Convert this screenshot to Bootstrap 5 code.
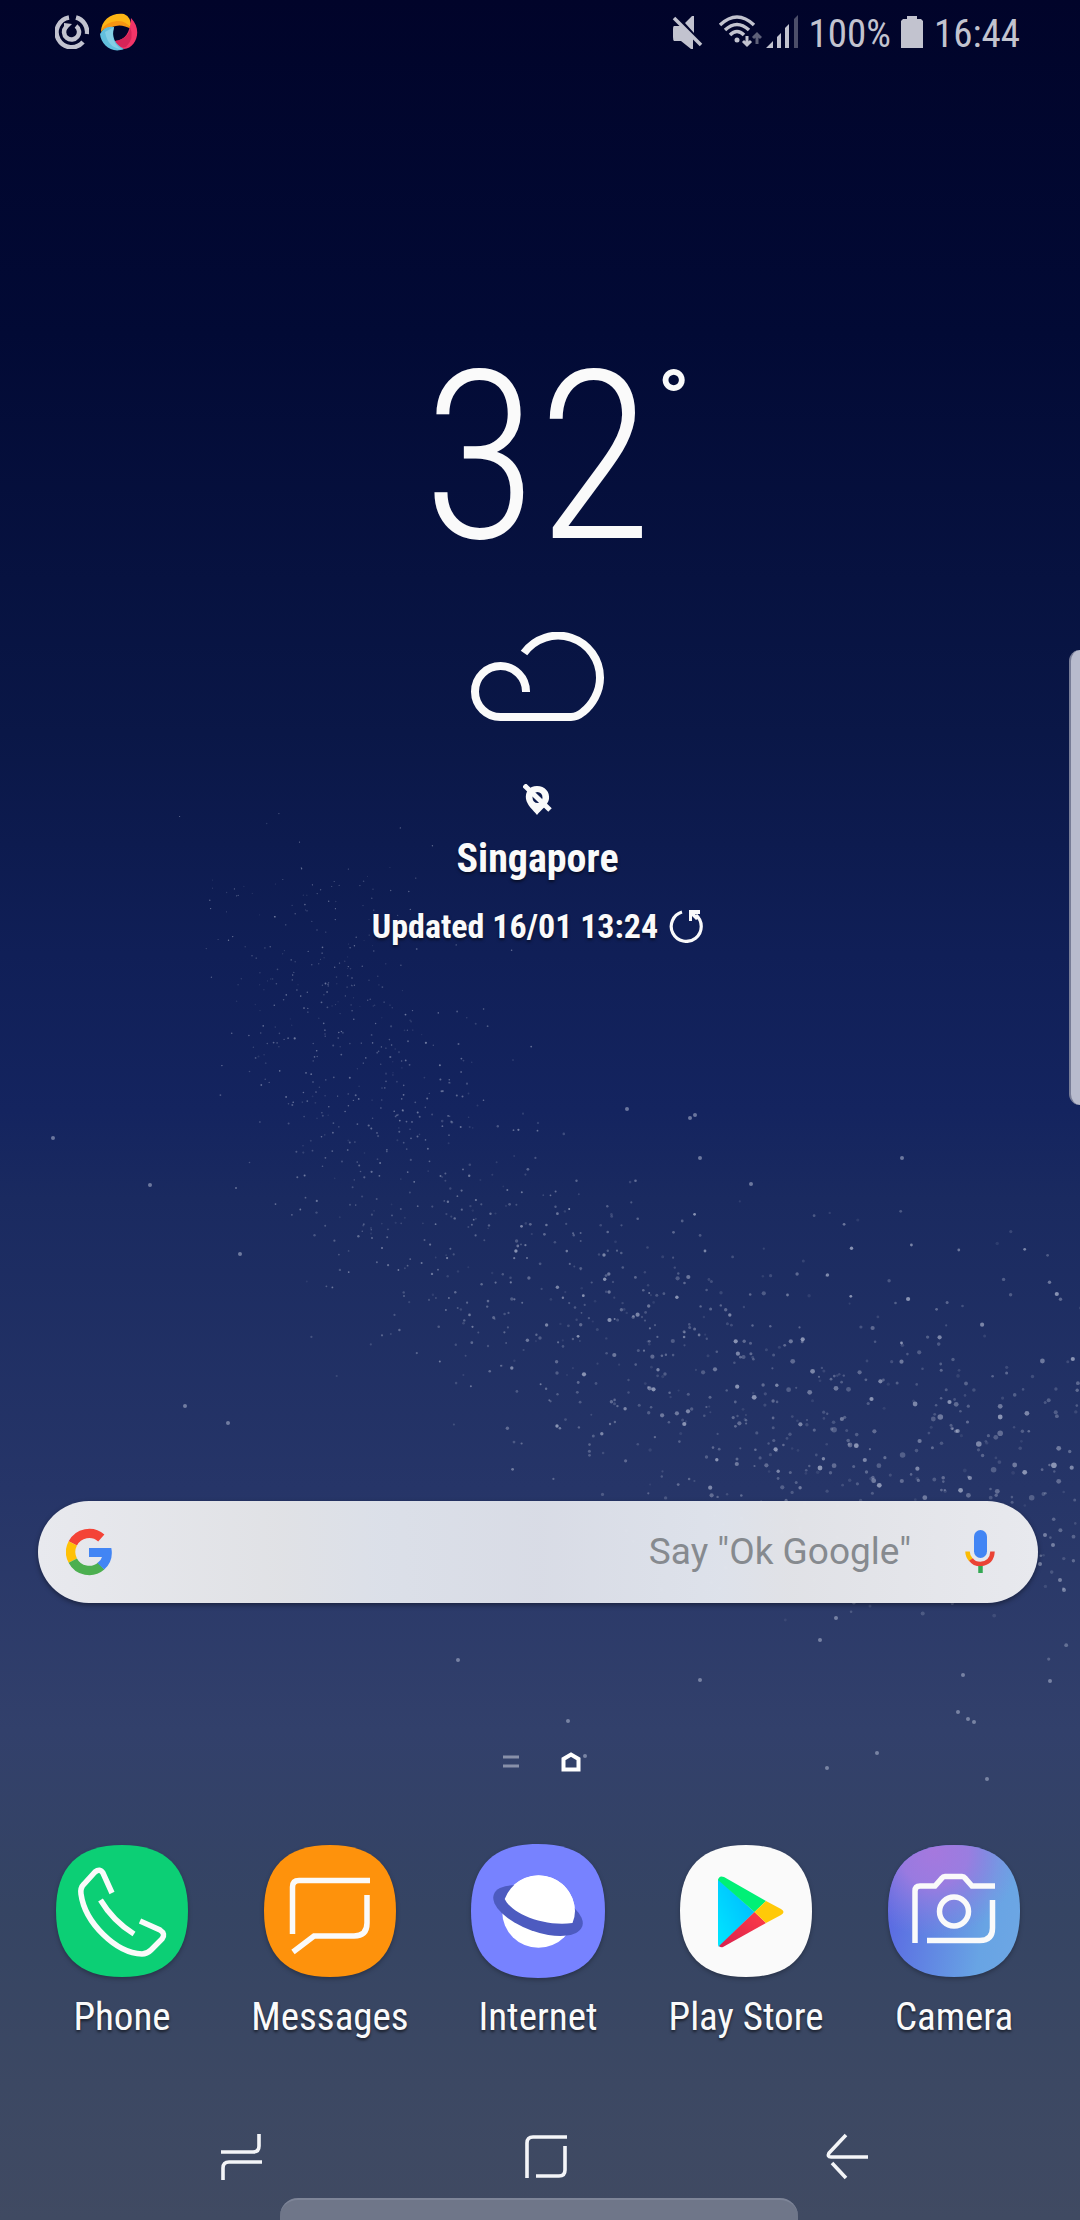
<!DOCTYPE html>
<html lang="en">
<head>
<meta charset="utf-8">
<meta name="viewport" content="width=device-width, initial-scale=1">
<title>Home screen</title>
<link href="https://cdn.jsdelivr.net/npm/bootstrap@5.3.0/dist/css/bootstrap.min.css" rel="stylesheet">
<style>
body{font-family:"Roboto Condensed",Roboto,"Liberation Sans",sans-serif;color:#fafafa;background:#3f4a62}
.phone-screen{background:linear-gradient(#01042a 0,#020a35 15%,#0a1747 33%,#101f57 43%,#14245f 50%,#1a2a60 54%,#263568 67%,#32406b 78%,#354463 86%,#3c4863 94%,#404a62 100%)}
.dust-layer{inset:0;width:100%;height:100%;pointer-events:none}
.status-row{height:64px;padding:0 60px 0 55px;color:#c2c3cf;font-size:39px;line-height:60px}
.wifi-sign{margin-left:14px}
.battery-text{margin-left:8px}
.battery-sign{margin-left:10px}
.clock-text{margin-left:11px}
.weather-box{padding-top:278px;padding-right:5px}
.temp-value{font-weight:300;font-size:236px;line-height:232px}
.temp-degree{font-size:86px;line-height:86px;font-weight:500;top:16px;left:100%;margin-left:5px}
.weather-cloud{margin-top:58px}
.weather-pin{margin-top:62px}
.city-name{font-size:40px;line-height:48px;font-weight:700;margin-top:19px;text-shadow:0 2px 3px #0008}
.updated-row{font-size:34px;line-height:40px;font-weight:700;gap:11px;margin-top:23px;text-shadow:0 2px 3px #0008}
.search-box{height:102px;margin:555px 42px 0 38px;padding:0 43px 0 28px;border-radius:51px;background:linear-gradient(90deg,#e8e9ee,#e4e5e8fa 24%,#dfe3ebfa 34%,#dcdfe8fa 50%,#e1e5edfa 68%,#e4e5e9fa 75%,#e8e9ee);box-shadow:0 2px 5px #0006}
.search-box input{font-family:Roboto,"Liberation Sans",sans-serif;font-size:37px;text-align:right;color:#868a8f;padding:0 54px 0 0}
.search-box input::placeholder{color:#868a8f;opacity:1}
.page-marks{margin-top:148px;gap:42px;height:22px;padding-left:3px}
.dock-row{margin-top:72px;padding:0 22px 0 18px}
.app-link{color:#fafafa;font-size:39px;line-height:48px;gap:16px;text-shadow:0 2px 3px #0009}
.app-link svg{filter:drop-shadow(0 2px 2px #0004)}
.nav-row{margin-top:84px;padding:0 211px 0 218px;height:64px}
.bottom-grip{height:22px;margin:9px 282px 0 280px;border-radius:18px 18px 0 0;background:#6f7689;border-top:2px solid #7e8598}
.edge-grip{right:0;top:650px;width:11px;height:455px;border-radius:11px 0 0 11px;background:#b8bbcd;border-left:2px solid #777c96}
</style>
<script src="https://cdn.jsdelivr.net/npm/bootstrap@5.3.0/dist/js/bootstrap.bundle.min.js"></script>
</head>
<body>
<div class="phone-screen position-relative overflow-hidden min-vh-100 d-flex flex-column">
<svg class="dust-layer position-absolute" id="dust" viewBox="0 0 1080 2220" preserveAspectRatio="xMidYMid slice" fill="#c0c7dc" aria-hidden="true"></svg>

<header class="status-row d-flex align-items-center position-relative">
  <svg width="34" height="34" viewBox="0 0 34 34" fill="none" stroke="#c2c3cf" stroke-width="4.5"><path d="M14 2.500A15 15 0 1 0 28 27M21 2.500A15 15 0 0 1 32 19M21 11A7.500 7.500 0 1 1 11 12"/><path d="M9 8v9l8-8z" fill="#c2c3cf" stroke="none"/></svg>
  <svg class="ms-2" width="44" height="44" viewBox="0 0 44 44"><path d="M4 22C4 9 16 2 27 4Q35 7 34 19Q29 11 22 14Q12 14 4 22z" fill="#fdb515"/><path d="M4 20Q9 12 20 11Q29 10 34 19Q24 13 15 17Q7 18 4 21z" fill="#f79512"/><path d="M34 8C46 20 39 38 27 39Q19 36 18 31Q33 30 34 8z" fill="#f23568"/><path d="M33 17Q33 28 18 31Q22 39 29 37Q38 28 33 17z" fill="#d62458"/><path d="M3 24Q8 15 17 17Q13 32 27 39C15 44 4 35 3 24z" fill="#62bfdd"/><path d="M17 17Q13 32 24 39Q11 38 8 22z" fill="#84cfe6"/></svg>
  <svg class="ms-auto" width="32" height="34" viewBox="0 0 32 34" fill="#c2c3cf"><path d="M2 11h7l12 12v11h-2l-10-8H2Q1 25 1 22V14Q1 11 2 11zM13 8l7-7h2v17z"/><path d="M2 3l27 27" stroke="#c2c3cf" stroke-width="3.500"/></svg>
  <svg class="wifi-sign" width="44" height="34" viewBox="0 0 44 34" fill="none" stroke="#c2c3cf" stroke-width="3.500"><path d="M2 10Q19-6 36 10M7 15Q19 4 31 15M12 20Q19 13 26 20"/><circle cx="19" cy="25" r="2.500" fill="#c2c3cf" stroke="none"/><path d="M29 21v9M25 26l4 4 4-4" stroke-width="3"/><path d="M39 29v-9M35 23l4-4 4 4" stroke="#5e6078" stroke-width="3"/></svg>
  <svg class="ms-1" width="34" height="34" viewBox="0 0 34 34" fill="#c2c3cf"><path d="M0 33l7-7v7zM11 22l4-4v15h-4zM19 13l4-4v24h-4z"/><path d="M28 4l4-4v33h-4z" fill="#4c4e69"/></svg>
  <span class="battery-text pt-1">100%</span>
  <svg class="battery-sign" width="22" height="34" viewBox="0 0 22 34" fill="#c2c3cf"><path d="M6 1h10v3h4l2 2v27H0V6l2-2h4z"/></svg>
  <time class="clock-text pt-1">16:44</time>
</header>

<main class="position-relative d-flex flex-column">
  <section class="weather-box d-flex flex-column align-items-center">
    <div class="temp-value position-relative">32<span class="temp-degree position-absolute">°</span></div>
    <svg class="weather-cloud" width="134" height="90" viewBox="0 0 134 90" fill="none" stroke="#fafafa" stroke-width="8"><path d="M53 21A42 42 0 0 1 129 46C129 60 121 73 112 80Q106 85 100 85H30A25.500 25.500 0 1 1 55 60"/></svg>
    <svg class="weather-pin" width="30" height="32" viewBox="0 0 30 32"><path d="M14 2C6 2 2 8 3 15C4 21 10 26 14 31C18 26 25 21 26 15C27 8 22 2 14 2zM14.500 8a5 5.500 0 1 1 0 11a5 5.500 0 1 1 0-11z" fill="#fafafa" fill-rule="evenodd"/><path d="M1 1l26 25" stroke="#fafafa" stroke-width="5"/></svg>
    <div class="city-name">Singapore</div>
    <div class="updated-row d-flex align-items-center"><span>Updated 16/01 13:24</span>
      <button class="btn p-0 border-0 d-flex" aria-label="Refresh"><svg width="34" height="34" viewBox="0 0 34 34"><path d="M13 3A15 15 0 1 0 27 6" fill="none" stroke="#fafafa" stroke-width="3.200"/><path d="M20 1h11v4h-5l4 4-3 2-4-4v5h-3z" fill="#fafafa"/></svg></button></div>
  </section>

  <form class="search-box d-flex align-items-center">
    <svg class="flex-shrink-0" width="46" height="48" viewBox="0 0 46 48" fill="none" stroke-width="9.400"><path d="M6.800 15.400A18.400 18.400 0 0 1 35.300 10" stroke="#f44336"/><path d="M6.800 32.600A18.400 18.400 0 0 1 6.800 15.400" stroke="#ffc107"/><path d="M35.200 38A18.400 18.400 0 0 1 6.800 32.600" stroke="#4caf50"/><path d="M23 20H45.300A23 23 0 0 1 38.200 41.500L31.500 35Q35 32.500 36 29H23z" fill="#4285f4"/></svg>
    <input class="form-control bg-transparent border-0 shadow-none" type="text" aria-label="Search" placeholder='Say "Ok Google"'>
    <button class="btn p-0 border-0 d-flex" type="button" aria-label="Voice search"><svg width="30" height="44" viewBox="0 0 30 44" fill="none" stroke-width="4.500"><rect x="9" y="0" width="13" height="28" rx="6.500" fill="#4285f4"/><path d="M2.500 21.500Q2.500 26 6 30" stroke="#fbbc05"/><path d="M6 29.500Q9 34 15.500 34Q27 33 27.500 21.500" stroke="#ea4335"/><path d="M15.500 36v7" stroke="#34a853"/></svg></button>
  </form>

  <div class="page-marks d-flex justify-content-center align-items-center">
    <svg width="16" height="14" viewBox="0 0 16 14" stroke="#8890a9" stroke-width="3"><path d="M0 2h16M0 11h16"/></svg>
    <svg width="20" height="20" viewBox="0 0 20 20" fill="none" stroke="#fff" stroke-width="4"><path d="M2.500 17.500V7L10 2.500 17.500 7v10.500z"/></svg>
  </div>

  <nav class="dock-row row row-cols-5 g-0">
    <a href="#" class="app-link col d-flex flex-column align-items-center text-decoration-none"><svg width="132" height="132" viewBox="0 0 132 132" fill="none" stroke="#fafafa" stroke-width="5.500"><path d="M66 0C110 0 132 22 132 66S110 132 66 132 0 110 0 66 22 0 66 0z" fill="#0ccf75" stroke="none"/><path d="M56 48L47 28Q44 23 39 27L28 39Q24 43 25 49C29 78 60 108 86 109Q91 109 95 105L106 94Q110 89 104 85L84 76M44.500 55Q57 76 78 89"/></svg><span>Phone</span></a>
    <a href="#" class="app-link col d-flex flex-column align-items-center text-decoration-none"><svg width="132" height="132" viewBox="0 0 132 132" fill="none" stroke="#fafafa" stroke-width="5.500"><path d="M66 0C110 0 132 22 132 66S110 132 66 132 0 110 0 66 22 0 66 0z" fill="#fe920c" stroke="none"/><path d="M106 35.500H35Q28.500 35.500 28.500 42V89M103 50V78Q103 91 90 91H50L29 107"/></svg><span>Messages</span></a>
    <a href="#" class="app-link col d-flex flex-column align-items-center text-decoration-none"><svg width="132" height="132" viewBox="1 1 132 132" overflow="visible"><path d="M67 0C112 0 134 22 134 67S112 134 67 134 0 112 0 67 22 0 67 0z" fill="#7782ff"/><circle cx="67.500" cy="67.500" r="36.300" fill="#fff"/><ellipse cx="67" cy="66.500" rx="47" ry="21" transform="rotate(20 67 66.500)" fill="#4d5bc0"/><path d="M33.700 55C40 69 72 83 101.500 79Q104 73 104 67A36.300 36.300 0 0 0 33.700 55z" fill="#fff"/></svg><span>Internet</span></a>
    <a href="#" class="app-link col d-flex flex-column align-items-center text-decoration-none"><svg width="132" height="132" viewBox="0 0 132 132"><defs><linearGradient id="playBlue" x1="1" y1="0" x2="0" y2="1"><stop stop-color="#00b4ff"/><stop offset="1" stop-color="#00e8ff"/></linearGradient><linearGradient id="playRed" x1="1" y1="0" x2="0" y2="1"><stop stop-color="#ff3d47"/><stop offset="1" stop-color="#d8204e"/></linearGradient></defs><path d="M66 0C110 0 132 22 132 66S110 132 66 132 0 110 0 66 22 0 66 0z" fill="#fafafa"/><path d="M38 34L74.500 67 39 102Q38 101 38 99z" fill="url(#playBlue)"/><path d="M38 35Q39 30 44 32L86 56 74.500 67z" fill="#00f076"/><path d="M39 101L74.500 67 86 78 43 102Q41 103 39 101z" fill="url(#playRed)"/><path d="M86 56L101 64Q106 67 101 70L86 78 74.500 67z" fill="#ffc908"/></svg><span>Play Store</span></a>
    <a href="#" class="app-link col d-flex flex-column align-items-center text-decoration-none"><svg width="132" height="132" viewBox="0 0 132 132" fill="none" stroke="#fafafa" stroke-width="5.500"><defs><linearGradient id="camBase" x1="0" y1=".4" x2="1" y2=".6"><stop stop-color="#5a68e2"/><stop offset=".75" stop-color="#68a4e4"/><stop offset="1" stop-color="#6ca6e4"/></linearGradient><radialGradient id="camGlow" cx=".35" cy=".05" r=".65"><stop stop-color="#a578de"/><stop offset=".4" stop-color="#a07be0" stop-opacity=".9"/><stop offset="1" stop-color="#8a80e0" stop-opacity="0"/></radialGradient></defs><g stroke="none"><path d="M66 0C110 0 132 22 132 66S110 132 66 132 0 110 0 66 22 0 66 0z" fill="url(#camBase)"/><path d="M66 0C110 0 132 22 132 66S110 132 66 132 0 110 0 66 22 0 66 0z" fill="url(#camGlow)"/></g><path d="M107 41H84L77 33Q76 31.500 74 31.500H57Q55 31.500 54 33L47 41H32Q27 41 27 46V98M104.500 55V83Q104.500 95.500 92 95.500H39"/><circle cx="66" cy="66.500" r="14.500"/></svg><span>Camera</span></a>
  </nav>
</main>

<footer class="position-relative">
  <div class="nav-row d-flex justify-content-between align-items-center">
    <button class="btn p-0 border-0 d-flex" aria-label="Recent apps"><svg width="48" height="48" viewBox="-1 0 48 48" fill="none" stroke="#f4f5f8" stroke-width="3.600"><path d="M2 19H34Q40 19 40 13V1M43 29H10Q4 29 4 35V47"/></svg></button>
    <button class="btn p-0 border-0 d-flex" aria-label="Home"><svg width="44" height="46" viewBox="0 0 44 46" fill="none" stroke="#f4f5f8" stroke-width="3.600"><path d="M43 3H9Q3 3 3 9V44M41 12V36Q41 42 35 42H12"/></svg></button>
    <button class="btn p-0 border-0 d-flex" aria-label="Back"><svg width="44" height="48" viewBox="0 0 44 48" fill="none" stroke="#f4f5f8" stroke-width="3.600"><path d="M21 2L4 20Q2 24 6 24H43M7 30L21 45"/></svg></button>
  </div>
  <div class="bottom-grip"></div>
</footer>
<div class="edge-grip position-absolute"></div>
</div>
<script>
// Wallpaper dust: bright specks of the dense region (x, y, radius), then fine seeded dust along the band.
const bright = [[26,13,4],[155,41,4],[187,27,3],[82,73,4],[58,79,4],[45,123,5],[48,138,4],[43,153,5],[120,103,4],[281,165,5],[218,205,4],[294,222,5],[283,238,5],[78,234,5],[155,262,5],[32,297,5],[295,276,5],[225,287,4],[328,329,5],[372,344,6],[360,352,5],[402,318,5],[296,360,6],[218,374,5],[126,375,5],[108,414,5],[74,421,5],[211,409,4],[153,485,5],[32,504,5],[154,519,5],[309,465,6],[227,523,6],[412,470,6],[427,509,5],[446,522,5],[404,565,6],[415,568,6],[301,605,5],[338,626,5],[402,638,5],[438,646,6],[154,678,5],[20,685,5],[275,701,5],[242,766,4],[34,808,4],[526,43,4],[469,97,4],[554,153,4],[480,235,6],[509,231,6],[478,292,5],[610,329,5],[621,345,5],[467,423,6],[538,405,4],[637,424,6],[660,424,5],[643,461,6],[658,471,6],[786,424,6],[818,418,6],[791,484,7],[845,514,7],[549,517,6],[581,508,6],[641,560,6],[711,555,5],[748,556,5],[780,569,7],[837,577,7],[687,592,7],[738,603,5],[508,634,6],[518,627,5],[478,640,6],[498,672,6],[647,670,6],[812,673,6],[903,689,8],[924,657,6],[745,748,6],[720,796,6],[752,814,5],[558,771,5],[640,792,6],[586,779,5],[572,886,6],[568,863,6],[763,862,6],[811,863,5],[865,804,7],[903,797,7],[874,776,5],[849,47,4],[930,73,4],[950,145,5],[803,222,5],[885,225,5],[713,280,6],[777,285,4],[948,289,4],[1007,384,6],[1112,135,4],[1083,34,4],[1240,150,4],[1103,297,6],[1180,328,4],[1188,412,6],[1133,457,6],[1085,485,6],[1085,429,4],[972,517,6],[1028,544,6],[942,568,7],[908,565,7],[1004,597,6],[1012,694,6],[1122,612,7],[1171,657,7],[1190,651,8],[1215,606,6],[1233,613,7],[1237,693,6],[1222,685,5],[1134,723,6],[963,737,7],[946,735,7],[986,780,6],[1024,797,7],[1010,842,7],[1025,856,7],[1086,843,6],[1128,806,6],[1088,765,8],[1148,893,7],[1245,871,7],[1266,886,7],[1270,834,6],[1340,712,7],[1352,619,7],[1352,651,7],[1352,700,8],[1294,732,8],[1334,809,8],[1391,795,7],[1418,817,7],[1344,874,7],[1424,640,7],[1412,694,5],[1510,745,7],[1497,796,8],[1510,844,7],[1545,803,6],[1437,893,8],[1466,483,7],[1548,477,6],[1560,571,5],[1303,374,6],[1380,284,5],[1485,247,5],[1505,282,6],[1515,298,5],[1418,148,4],[1480,166,4]];
let seed = 29;
const rnd = () => (seed = (seed * 16807) % 2147483647) / 2147483647;
const bell = () => rnd() + rnd() + rnd() + rnd() - 2;
let dots = '';
const put = (x, y, r, o) => { dots += `<circle cx="${x.toFixed(1)}" cy="${y.toFixed(1)}" r="${r.toFixed(1)}" opacity="${o.toFixed(2)}"/>`; };
bright.forEach(([x, y, r], i) => put(500 + x * .37, 1200 + y / 3, r / 2.9, .3 + (i * 7 % 5) * .09));
const spine = [[325,910],[330,1010],[370,1130],[450,1225],[560,1310],[720,1400],[900,1450],[1080,1500]];
for (let i = 0; i < 1150; i++) {
  const t = Math.pow(rnd(), .95) * 6.99, k = Math.floor(t), f = t - k, a = spine[k], b = spine[k + 1];
  const x = a[0] + (b[0] - a[0]) * f + bell() * (92 + t * 8);
  const y = a[1] + (b[1] - a[1]) * f + bell() * (90 + t * 8);
  put(x, y, .6 + t * .16 * (.6 + rnd() * .7), .1 + rnd() * (t < 4 ? .44 : .3));
}
[[53,1138],[150,1185],[240,1254],[185,1406],[228,1423],[458,1660],[700,1680],[963,1675],[968,1719],[974,1722],[958,1712],[877,1753],[827,1768],[987,1779],[585,1756],[568,1721],[836,1618],[820,1640],[1050,1681],[1053,1545],[1060,1580],[1045,1535],[1064,1590],[1040,1564],[695,1115],[690,1118],[700,1158],[627,1109],[751,1184],[902,1158]].forEach(([x, y]) => put(x, y, 2, .5));
document.getElementById('dust').innerHTML = dots;
</script>
</body>
</html>
